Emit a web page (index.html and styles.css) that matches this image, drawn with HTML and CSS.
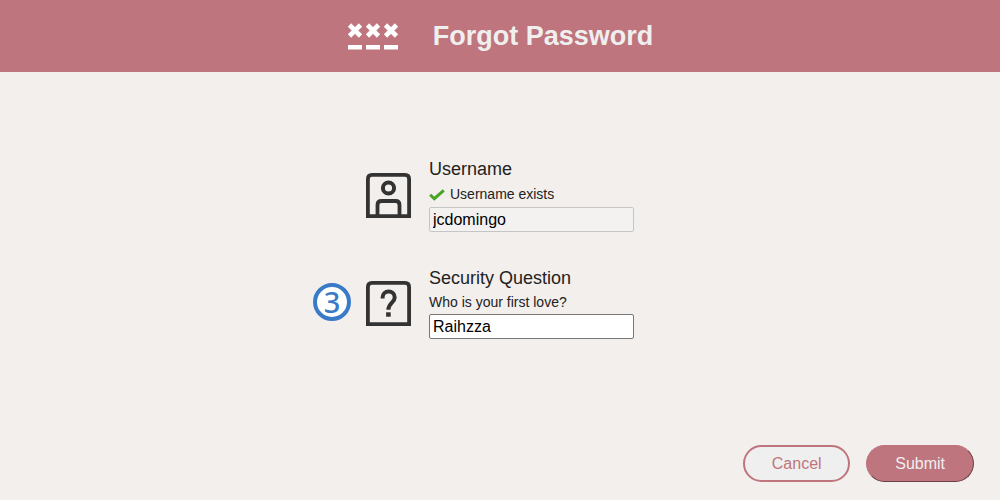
FILE: index.html
```html
<!DOCTYPE html>
<html lang="en">
<head>
<meta charset="utf-8">
<meta name="viewport" content="width=device-width, initial-scale=1">
<title>Forgot Password</title>
<link rel="stylesheet" href="styles.css">
</head>
<body>
<header class="banner">
  <svg class="banner-icon" width="52" height="28" viewBox="0 0 52 28" aria-hidden="true">
    <g stroke="#fff" stroke-width="4.600" fill="none">
      <path d="M2.500 3l11 11M13.500 3l-11 11M20.500 3l11 11M31.500 3l-11 11M38.500 3l11 11M49.500 3l-11 11"/>
      <path d="M1 25.200h14M19 25.200h14M37 25.200h14"/>
    </g>
  </svg>
  <h1 class="banner-title">Forgot Password</h1>
</header>
<form class="page">
  <main class="fields">
    <div class="row">
      <svg class="row-icon" width="45" height="45" viewBox="0 0 45 45" aria-hidden="true">
        <g fill="none" stroke="#333">
          <path stroke-width="3.800" d="M1.900 43.100V6Q1.900 1.900 6 1.900H39Q43.100 1.900 43.100 6V43.100Z"/>
          <circle stroke-width="4" cx="22.500" cy="15" r="5.600"/>
          <path stroke-width="3.800" d="M11.500 43V32Q11.500 28 15.500 28H29.500Q33.500 28 33.500 32V43"/>
        </g>
      </svg>
      <div class="field">
        <label class="label" for="username">Username</label>
        <p class="hint hint-status" id="username-status">
          <svg width="16" height="12" viewBox="0 0 16 12" aria-hidden="true"><path d="M1.200 5.700L5.300 9.700L14.800 1.300" fill="none" stroke="#4aa321" stroke-width="3"/></svg>
          Username exists
        </p>
        <input class="input input-locked" id="username" type="text" value="jcdomingo" aria-describedby="username-status" disabled>
      </div>
    </div>
    <div class="row">
      <span class="step">3</span>
      <svg class="row-icon" width="45" height="45" viewBox="0 0 45 45" aria-hidden="true">
        <path d="M1.900 43.100V6Q1.900 1.900 6 1.900H39Q43.100 1.900 43.100 6V43.100Z" fill="none" stroke="#333" stroke-width="3.800"/>
        <path d="M16.600 17.500V16.500A6 5.900 0 0 1 28.700 16.500C28.700 21.500 22.400 22 22.400 28.700" fill="none" stroke="#333" stroke-width="4"/>
        <path d="M20.100 31.300h4.600v4.400h-4.600z" fill="#333"/>
      </svg>
      <div class="field">
        <label class="label" for="answer">Security Question</label>
        <p class="hint" id="question">Who is your first love?</p>
        <input class="input" id="answer" type="text" value="Raihzza" aria-describedby="question">
      </div>
    </div>
  </main>
  <footer class="actions">
    <button class="button button-cancel" type="button">Cancel</button>
    <button class="button button-submit" type="submit">Submit</button>
  </footer>
</form>
</body>
</html>
```
FILE: styles.css
```css
* {
  box-sizing: border-box;
}

body {
  display: flex;
  flex-direction: column;
  min-height: 100vh;
  margin: 0;
  background: #f3efec;
  color: #222;
  font-family: "Liberation Sans", Arial, sans-serif;
}

.banner {
  display: flex;
  align-items: center;
  justify-content: center;
  gap: 34px;
  padding: 20px;
  background: #bf757d;
}

.banner-title {
  margin: 0;
  color: #efefef;
  font-size: 27px;
  line-height: 32px;
}

.page {
  display: flex;
  flex: 1;
  flex-direction: column;
}

.fields {
  display: flex;
  flex: 1;
  flex-direction: column;
  justify-content: center;
  gap: 35px;
  padding-bottom: 20px;
}

.row {
  display: grid;
  grid-template-columns: 1fr 45px 18px 205px 1fr;
  align-items: center;
}

.step {
  display: flex;
  grid-column: 1;
  align-items: center;
  justify-content: center;
  justify-self: end;
  width: 38px;
  height: 38px;
  margin: 0 15px 2px 0;
  border: 4px solid #3a7bc8;
  border-radius: 50%;
  background: #fff;
  color: #3a7bc8;
  font-family: "Noto Sans", "Open Sans", sans-serif;
  font-size: 29px;
  font-weight: 500;
  line-height: 30px;
}

.row-icon {
  grid-column: 2;
}

.field {
  display: flex;
  grid-column: 4;
  flex-direction: column;
}

.label {
  font-size: 18px;
  line-height: 22px;
}

.hint {
  margin: 3px 0 1px;
  font-size: 14px;
  line-height: 21px;
}

.hint-status {
  display: flex;
  align-items: center;
  gap: 5px;
  line-height: 23px;
}

.input {
  width: 100%;
  height: 25px;
  padding: 1px 3px;
  border: 1px solid #767676;
  border-radius: 2px;
  background: #fff;
  color: #000;
  font: 16px "Liberation Sans", Arial, sans-serif;
}

.input-locked {
  border-color: #c5c5c5;
  background: #f4f2f0;
}

.actions {
  display: flex;
  justify-content: flex-end;
  gap: 16px;
  padding: 0 26px 18px;
}

.button {
  min-width: 107px;
  height: 37px;
  border-radius: 19px;
  font: 16px "Liberation Sans", Arial, sans-serif;
}

.button-cancel {
  padding: 0 26px;
  border: 2px solid #bf757d;
  background: #efefef;
  color: #bf757d;
}

.button-submit {
  padding: 0 28px;
  border: 1px outset #bf757d;
  background: #bf757d;
  color: #efefef;
}
```
